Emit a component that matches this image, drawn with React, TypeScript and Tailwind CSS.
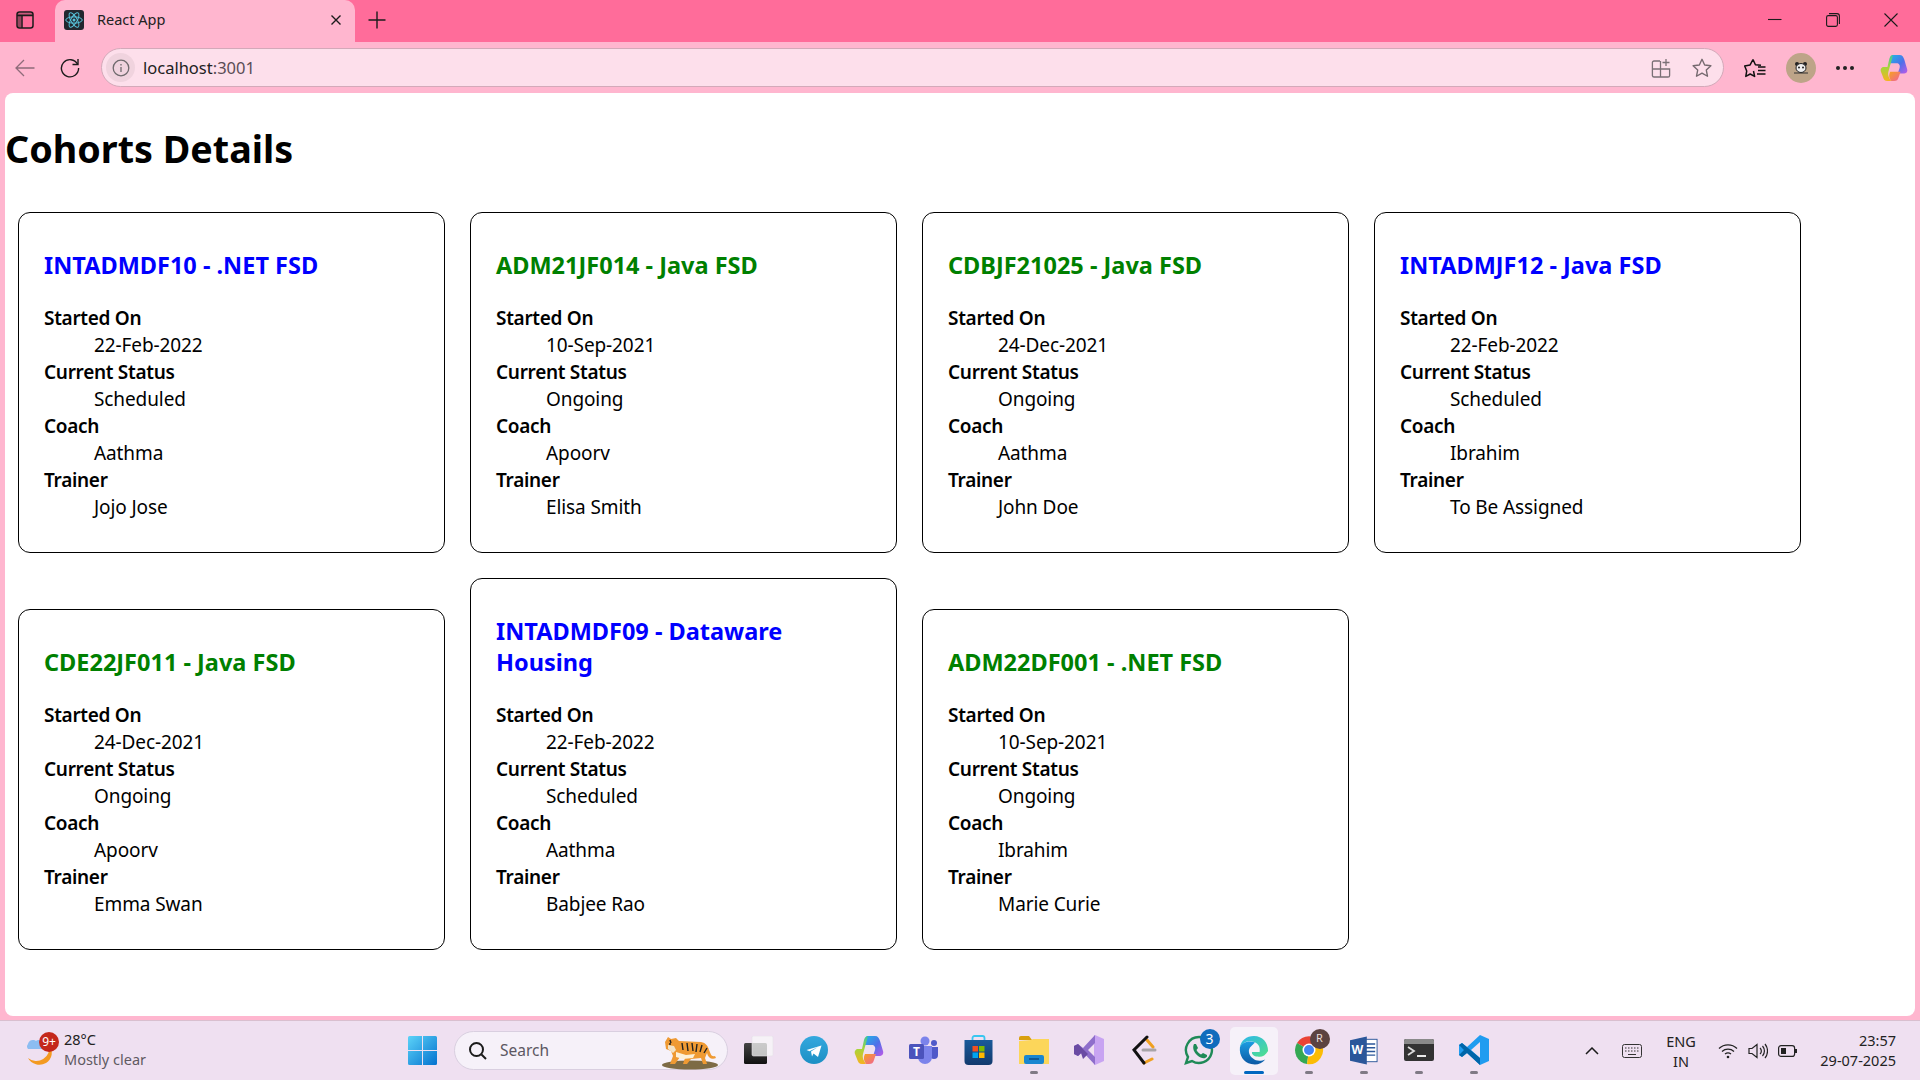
import React from "react";

const cards = [
  { t: "INTADMDF10 - .NET FSD", c: "text-[#0000ff]", d: "22-Feb-2022", s: "Scheduled", co: "Aathma", tr: "Jojo Jose" },
  { t: "ADM21JF014 - Java FSD", c: "text-[#008000]", d: "10-Sep-2021", s: "Ongoing", co: "Apoorv", tr: "Elisa Smith" },
  { t: "CDBJF21025 - Java FSD", c: "text-[#008000]", d: "24-Dec-2021", s: "Ongoing", co: "Aathma", tr: "John Doe" },
  { t: "INTADMJF12 - Java FSD", c: "text-[#0000ff]", d: "22-Feb-2022", s: "Scheduled", co: "Ibrahim", tr: "To Be Assigned" },
  { t: "CDE22JF011 - Java FSD", c: "text-[#008000]", d: "24-Dec-2021", s: "Ongoing", co: "Apoorv", tr: "Emma Swan" },
  { t: "INTADMDF09 - Dataware Housing", c: "text-[#0000ff]", d: "22-Feb-2022", s: "Scheduled", co: "Aathma", tr: "Babjee Rao" },
  { t: "ADM22DF001 - .NET FSD", c: "text-[#008000]", d: "10-Sep-2021", s: "Ongoing", co: "Ibrahim", tr: "Marie Curie" },
];

function Card({ t, c, d, s, co, tr }: (typeof cards)[number]) {
  const rows: [string, string][] = [["Started On", d], ["Current Status", s], ["Coach", co], ["Trainer", tr]];
  return (
    <div className="w-[427px] rounded-[12px] border border-black px-[25px] pt-[37px] pb-[31px]">
      <h3 className={`mb-[24px] text-[23.5px] leading-[31px] font-bold ${c}`}>{t}</h3>
      <dl className="text-[19px] leading-[27px]">
        {rows.map(([a, b]) => (
          <React.Fragment key={a}>
            <dt className="font-semibold tracking-[-0.3px]">{a}</dt>
            <dd className="pl-[50px] tracking-[-0.1px]">{b}</dd>
          </React.Fragment>
        ))}
      </dl>
    </div>
  );
}

function Task({ children, dot, active, badge }: { children: React.ReactNode; dot?: boolean; active?: boolean; badge?: React.ReactNode }) {
  return (
    <div className={`relative mx-[3.5px] flex h-[48px] w-[48px] items-center justify-center rounded-[5px] pb-[1px] ${active ? "bg-[#f6f1f9]" : ""}`}>
      {children}
      {badge}
      {dot && <span className="absolute bottom-[1px] h-[3px] w-[8px] rounded-full bg-[#7f7a85]" />}
      {active && <span className="absolute bottom-[1px] h-[3px] w-[20px] rounded-full bg-[#0067c0]" />}
    </div>
  );
}

export default function App() {
  return (
    <div className="flex h-[1080px] w-[1920px] flex-col overflow-hidden bg-[#ffb6cf] text-black" style={{ fontFamily: '"Noto Sans", sans-serif' }}>
      {/* title bar */}
      <div className="flex h-[42px] items-center bg-[#ff6c9a]">
        <div className="flex w-[55px] pb-[2px] pl-[16px]">
          <svg width="18" height="18" viewBox="0 0 18 18" fill="none" stroke="#1b1b1b" strokeWidth="1.5">
            <path d="M1.500 2.500h15v2h-15zM1.500 4.500h4v12h-4z" fill="#1b1b1b" stroke="none" opacity=".45" />
            <rect x="1" y="1" width="16" height="16" rx="2.500" />
            <path d="M1 4.500h16M6 4.500V17" />
          </svg>
        </div>
        <div className="flex h-[42px] w-[300px] items-center rounded-t-[10px] bg-[#ffb6cf] pb-[2px] pl-[9px] pr-[13px]">
          <div className="flex h-[20px] w-[20px] items-center justify-center rounded-[3px] bg-[#23272f]">
            <svg width="18" height="18" viewBox="-12 -11 24 22" fill="none" stroke="#58c4dc" strokeWidth="1.300">
              <circle r="2" fill="#58c4dc" stroke="none" />
              <ellipse rx="11" ry="4.200" />
              <ellipse rx="11" ry="4.200" transform="rotate(60)" />
              <ellipse rx="11" ry="4.200" transform="rotate(120)" />
            </svg>
          </div>
          <span className="ml-[13px] flex-1 text-[14.5px] text-[#222]">React App</span>
          <svg width="12" height="12" viewBox="0 0 12 12" stroke="#1b1b1b" strokeWidth="1.400"><path d="M1.500 1.500l9 9M10.500 1.500l-9 9" /></svg>
        </div>
        <div className="ml-[13px] flex pb-[2px]">
          <svg width="18" height="18" viewBox="0 0 18 18" stroke="#1b1b1b" strokeWidth="1.400"><path d="M9 .5v17M.5 9h17" /></svg>
        </div>
        <div className="ml-auto flex items-center pb-[2px]">
          <div className="flex w-[58px] justify-center"><svg width="14" height="14" viewBox="0 0 14 14" stroke="#1b1b1b" strokeWidth="1.100"><path d="M0 6.500h13.500" /></svg></div>
          <div className="flex w-[58px] justify-center">
            <svg width="14" height="14" viewBox="0 0 14 14" fill="none" stroke="#1b1b1b" strokeWidth="1.100"><rect x=".6" y="2.600" width="10.800" height="10.800" rx="1.600" /><path d="M3 .6h8a2.400 2.400 0 0 1 2.400 2.400v8" /></svg>
          </div>
          <div className="flex w-[58px] justify-center"><svg width="14" height="14" viewBox="0 0 14 14" stroke="#1b1b1b" strokeWidth="1.100"><path d="M.5.5l13 13M13.500.5l-13 13" /></svg></div>
        </div>
      </div>
      {/* toolbar */}
      <div className="flex h-[51px] items-center">
        <div className="flex w-[47px] justify-center pl-[3px]">
          <svg width="20" height="18" viewBox="0 0 20 18" fill="none" stroke="#8f6b7a" strokeWidth="1.300"><path d="M19.500 9H1M9 1L1 9l8 8" /></svg>
        </div>
        <div className="flex w-[46px] justify-center">
          <svg width="20" height="20" viewBox="0 0 20 20" fill="none" stroke="#1b1b1b" strokeWidth="1.400"><path d="M17.600 6.200A8.600 8.600 0 1 0 18.600 10" /><path d="M18 1v5.500h-5.500" /></svg>
        </div>
        <div className="ml-[8px] flex h-[39px] w-[1623px] items-center rounded-full border border-[#d3a9b9] bg-[#fddfeb] pl-[4px]">
          <div className="flex h-[29px] w-[29px] items-center justify-center rounded-full bg-[#f0d3de]">
            <svg width="18" height="18" viewBox="0 0 18 18" fill="none" stroke="#6f6a6d" strokeWidth="1.300"><circle cx="9" cy="9" r="7.800" /><path d="M9 8v5M9 5v1.400" /></svg>
          </div>
          <span className="ml-[8px] flex-1 pt-[1px] text-[16.5px] text-[#222]">localhost<span className="text-[#5b4d55]">:3001</span></span>
          <svg className="mr-[20px]" width="20" height="20" viewBox="0 0 20 20" fill="none" stroke="#7a7076" strokeWidth="1.300">
            <path d="M9 3H3a1.600 1.600 0 0 0-1.600 1.600v13A1.600 1.600 0 0 0 3 19h14a1.600 1.600 0 0 0 1.600-1.600V11H1.400M9.500 3v16M15 1v7M11.500 4.500h7" />
          </svg>
          <svg className="mr-[10px]" width="22" height="22" viewBox="0 0 24 24" fill="none" stroke="#75696f" strokeWidth="1.500" strokeLinejoin="round"><path d="M12 2.500l2.900 6.200 6.800.8-5 4.700 1.300 6.800-6-3.400-6 3.400 1.300-6.800-5-4.700 6.800-.8z" /></svg>
        </div>
        <div className="ml-[20px] flex w-[22px] justify-center">
          <svg width="22" height="20" viewBox="0 0 22 20" fill="none" stroke="#111" strokeWidth="1.500" strokeLinejoin="round"><path d="M9 1.500l2.400 5.200 5.600.6M9.500 13l1.100 5.400L6.200 16l-4.400 2.400.9-5.300L.7 8l5.400-1.100L9 1.500" /><path d="M14 9h7.500M14 12.500h7.500M13 16h8.500" /></svg>
        </div>
        <div className="ml-[20px] flex h-[30px] w-[30px] items-center justify-center rounded-full bg-[#bda488]">
          <svg width="14" height="12" viewBox="0 0 14 12"><circle cx="3" cy="2" r="2" fill="#222" /><circle cx="11" cy="2" r="2" fill="#222" /><ellipse cx="7" cy="6" rx="5" ry="4.500" fill="#eee" stroke="#222" /><circle cx="5" cy="5.500" r="1" fill="#222" /><circle cx="9" cy="5.500" r="1" fill="#222" /><path d="M0 11h14" stroke="#333" /></svg>
        </div>
        <div className="ml-[20px] flex w-[18px] justify-between">
          <span className="h-[4px] w-[4px] rounded-full bg-[#222]" /><span className="h-[4px] w-[4px] rounded-full bg-[#222]" /><span className="h-[4px] w-[4px] rounded-full bg-[#222]" />
        </div>
        <div className="ml-[26px]">
          <CopilotIcon size={28} id="t" />
        </div>
      </div>
      {/* page */}
      <div className="mx-[5px] h-[923px] flex-none rounded-[8px] bg-white">
        <h1 className="pt-[29px] text-[37.7px] leading-[53px] font-bold">Cohorts Details</h1>
        <div className="mt-[37px] flex flex-wrap items-end gap-x-[25px] gap-y-[25px] pl-[13px]">
          {cards.map((c) => <Card key={c.t} {...c} />)}
        </div>
      </div>
      <div className="h-[4px] flex-none bg-[#ffb6cf]" />
      {/* taskbar */}
      <div className="relative flex h-[60px] flex-none items-center border-t border-[#d9bfcf] bg-[#efe0f1]">
        <div className="relative ml-[24px] h-[40px] w-[40px] flex-none">
          <svg width="40" height="40" viewBox="0 0 40 40">
            <path d="M4 13a5 5 0 0 1 8-3 5 5 0 0 1 8 3 4 4 0 0 1 2 5H4a4 4 0 0 1 0-5z" fill="#8cbdf2" />
            <path d="M25 14a13 13 0 0 1-21 13 13 13 0 0 0 18 5 12 12 0 0 0 3-18z" fill="#f39a21" />
          </svg>
          <span className="absolute left-[15px] top-[1px] flex h-[20px] w-[20px] items-center justify-center rounded-full bg-[#c4281b] text-[12px] text-white">9+</span>
        </div>
        <div className="mb-[4px] w-[344px] flex-none text-[14.5px] leading-[20px] text-[#222]">
          <div>28°C</div>
          <div className="text-[#5f5a62]">Mostly clear</div>
        </div>
        <svg className="flex-none" width="29" height="29" viewBox="0 0 29 29"><defs><linearGradient id="w" x1="0" y1="0" x2="1" y2="1"><stop offset="0" stopColor="#5cd3f8" /><stop offset="1" stopColor="#0472cf" /></linearGradient></defs><path d="M0 1.500A1.500 1.500 0 0 1 1.500 0H14v14H0zM15 0h12.500A1.500 1.500 0 0 1 29 1.500V14H15zM0 15h14v14H1.500A1.500 1.500 0 0 1 0 27.500zM15 15h14v12.500a1.500 1.500 0 0 1-1.500 1.500H15z" fill="url(#w)" /></svg>
        <div className="relative ml-[17px] flex h-[39px] w-[274px] flex-none items-center rounded-full border border-[#d9cfe0] bg-[#f6f1f9]">
          <svg className="ml-[13px]" width="20" height="20" viewBox="0 0 20 20" fill="none" stroke="#1b1b1b" strokeWidth="2"><circle cx="8.500" cy="8.500" r="6.500" /><path d="M13.500 13.500L18 18" /></svg>
          <span className="ml-[12px] text-[15.5px] text-[#5c5762]">Search</span>
          <svg className="absolute right-[5px] top-[3px]" width="60" height="36" viewBox="0 0 60 36">
            <ellipse cx="28" cy="30" rx="28" ry="4.500" fill="#7d6b45" />
            <path d="M3 7l3-5 3 2 5-1 3 3 22 1c5 1 7 4 8 8 2 4 2 7 6 6l1 2c-4 2-8 0-9-5l-2 5 2 6h-4l-2-6-10 1-4 5h-4l2-6-5-1-5 7H8l3-8-2-5-5-2z" fill="#ef9a33" />
            <path d="M6 10l6 1 2 4-3 3-5-4z" fill="#f4e3c6" />
            <path d="M14 17l10 3 9-1-2 4-10 1-7-2z" fill="#fdf0d8" />
            <path d="M20 8l1 7M25 8l1 8M30 8l1 8M35 9l-1 8M40 10l-2 7M45 13l-3 5M8 5l1 3" stroke="#222" strokeWidth="1.400" fill="none" />
            <circle cx="8" cy="9" r="1" fill="#222" />
          </svg>
        </div>
        <div className="ml-[3px] flex flex-none items-center">
          <Task>
            <svg width="30" height="28" viewBox="0 0 30 28">
              <defs><linearGradient id="tv" x1="0" y1="0" x2="0" y2="1"><stop offset="0" stopColor="#444" /><stop offset="1" stopColor="#111" /></linearGradient></defs>
              <rect x="0" y="7" width="23" height="21" rx="1.500" fill="url(#tv)" />
              <rect x="8" y="0" width="21" height="20" rx="1.500" fill="#f8f8f8" fillOpacity=".75" stroke="#e6e0e8" strokeWidth=".6" />
            </svg>
          </Task>
          <Task>
            <svg width="28" height="28" viewBox="0 0 28 28">
              <defs><linearGradient id="tg" x1="0" y1="0" x2="0" y2="1"><stop offset="0" stopColor="#34a8de" /><stop offset="1" stopColor="#1c8fc4" /></linearGradient></defs>
              <circle cx="14" cy="14" r="14" fill="url(#tg)" />
              <path d="M6.500 14L21.500 9.500 18 21l-4.500-3.500L12 20.500l-1-5 7-4.500-8.500 4.200z" fill="#fff" />
            </svg>
          </Task>
          <Task><CopilotIcon size={30} id="b" /></Task>
          <Task>
            <svg width="30" height="28" viewBox="0 0 30 28"><circle cx="16" cy="5" r="4.500" fill="#7b83eb" /><circle cx="25" cy="7" r="3" fill="#5059c9" /><path d="M21 11h8v8a4 4 0 0 1-8 0z" fill="#5059c9" /><path d="M9 10h14v11a6.500 6.500 0 0 1-14 0z" fill="#7b83eb" /><rect y="8" width="15" height="15" rx="1.500" fill="#4b53bc" /><text x="7.500" y="20" fontSize="12" fontWeight="700" textAnchor="middle" fill="#fff">T</text></svg>
          </Task>
          <Task>
            <svg width="29" height="30" viewBox="0 0 28 30"><path d="M8 6V3a2 2 0 0 1 2-2h8a2 2 0 0 1 2 2v3" fill="none" stroke="#39c6f0" strokeWidth="1.800" /><defs><linearGradient id="st" x1="0" y1="0" x2="0" y2="1"><stop offset="0" stopColor="#1a5a9a" /><stop offset="1" stopColor="#123a6e" /></linearGradient></defs><path d="M0 5h28v21a4 4 0 0 1-4 4H4a4 4 0 0 1-4-4z" fill="url(#st)" /><rect x="8" y="11" width="5.500" height="5.500" fill="#f25022" /><rect x="14.500" y="11" width="5.500" height="5.500" fill="#7fba00" /><rect x="8" y="17.500" width="5.500" height="5.500" fill="#00a4ef" /><rect x="14.500" y="17.500" width="5.500" height="5.500" fill="#ffb900" /></svg>
          </Task>
          <Task dot>
            <svg width="30" height="28" viewBox="0 0 30 28"><path d="M0 2a2 2 0 0 1 2-2h8l3 4H0z" fill="#d9a00f" /><path d="M0 5l12-1 2-1h16v25H0z" fill="#fcd65a" /><rect x="5" y="19" width="20" height="9" rx="2" fill="#1a86d0" /><path d="M10 23h10" stroke="#0b4f8a" strokeWidth="1.600" /></svg>
          </Task>
          <Task>
            <svg width="30" height="30" viewBox="0 0 30 30"><path d="M21 0l9 4v22l-9 4-1-1V1z" fill="#c8a4f2" /><path d="M21 0L9 13 4 9l-4 2v8l4 2 5-4 12 13v-8l-7-7 7-7z" fill="#8e6ecb" /><path d="M0 11l4-2 10 10-5 5-2-6-3 3-4-2z" fill="#6a4ba3" /></svg>
          </Task>
          <Task>
            <svg width="26" height="30" viewBox="0 0 26 30" fill="none" strokeLinecap="round" strokeWidth="3"><path d="M16 5l6 7M13 28l8-4" stroke="#f0a020" /><path d="M16 2L3 15l10 13" stroke="#111" /><path d="M12 15h12" stroke="#a8a4a8" /></svg>
          </Task>
          <Task badge={<span className="absolute right-[3px] top-[2px] flex h-[20px] w-[20px] items-center justify-center rounded-full bg-[#0f6cbd] text-[14px] text-white">3</span>}>
            <svg width="30" height="30" viewBox="0 0 30 30" fill="none"><path d="M15 2a13 13 0 0 0-11 20l-2 6 6-2A13 13 0 1 0 15 2z" stroke="#1f8a57" strokeWidth="2.400" /><path d="M10 9l2 0 2 4-1.500 2c1 2 3 3.500 4.500 4.500l2-1.500 4 2 0 1.500c-2 3-6 2-9.500-1S8 13 10 9z" fill="#1f8a57" /></svg>
          </Task>
          <Task active>
            <svg width="30" height="30" viewBox="0 0 32 32"><defs><linearGradient id="e1" x1="0" y1="0" x2="1" y2="1"><stop offset="0" stopColor="#2bb5ee" /><stop offset="1" stopColor="#50e08a" /></linearGradient><linearGradient id="e2" x1="0" y1="0" x2="0" y2="1"><stop offset="0" stopColor="#1b9de2" /><stop offset="1" stopColor="#0c59a4" /></linearGradient></defs><path d="M31 17C31 8 25 1 16 1 8 1 2 6 1 13c3-5 8-7 13-6 6 1 9 5 8 11h-8c-1 2 2 5 6 5 4 1 8-1 11-6z" fill="url(#e1)" /><path d="M1 13c-1 9 4 16 12 18 6 1 11 0 15-5-4 2-10 2-13-1-5-3-6-10-2-13 1-1 2-2 4-4C12 6 4 7 1 13z" fill="url(#e2)" /></svg>
          </Task>
          <Task dot badge={<span className="absolute right-[3px] top-[2px] flex h-[20px] w-[20px] items-center justify-center rounded-full bg-[#5c4340] text-[11px] text-[#e8ddd8]">R</span>}>
            <svg width="30" height="30" viewBox="0 0 30 30"><path d="M15 15L3 8a14 14 0 0 1 24 0z" fill="#ea4335" /><path d="M15 15l-12-7a14 14 0 0 0 10 21z" fill="#34a853" /><path d="M15 15l-2 14a14 14 0 0 0 14-21z" fill="#fbbc05" /><circle cx="15" cy="15" r="6.500" fill="#fff" /><circle cx="15" cy="15" r="5" fill="#4285f4" /></svg>
          </Task>
          <Task dot>
            <svg width="28" height="29" viewBox="0 0 30 30"><rect x="10" y="3" width="19" height="24" fill="#fff" stroke="#2b579a" /><path d="M17 8h10M17 12h10M17 16h10M17 20h10" stroke="#2b579a" strokeWidth="1.500" /><path d="M0 4l18-4v30L0 26z" fill="#2b579a" /><text x="8" y="19" fontSize="13" fontWeight="700" textAnchor="middle" fill="#fff">W</text></svg>
          </Task>
          <Task dot>
            <svg width="30" height="22" viewBox="0 0 30 22"><rect width="30" height="22" rx="2" fill="#333" /><path d="M0 2a2 2 0 0 1 2-2h26a2 2 0 0 1 2 2v3H0z" fill="#8a8a8a" /><path d="M4 8l6 4-6 4" fill="none" stroke="#ddd" strokeWidth="1.800" /><path d="M13 17h9" stroke="#fff" strokeWidth="1.800" /></svg>
          </Task>
          <Task dot>
            <svg width="30" height="30" viewBox="0 0 30 30"><path d="M21 0l9 4v22l-9 4L8 18l-5 4-3-2v-10l3-2 5 4z" fill="#1f9cf0" /><path d="M21 7v16l-9-8z" fill="#efe0f1" /><path d="M0 10l3-2 18 15v7L8 18l-5 4-3-2 5-5z" fill="#0065a9" /></svg>
          </Task>
        </div>
        <div className="ml-auto flex flex-none items-center pr-[24px] text-[#222]">
          <svg width="14" height="8" viewBox="0 0 14 8" fill="none" stroke="#1b1b1b" strokeWidth="1.500"><path d="M1 7l6-6 6 6" /></svg>
          <svg className="ml-[23px]" width="20" height="14" viewBox="0 0 20 14" fill="none" stroke="#333"><rect x=".5" y=".5" width="19" height="13" rx="2" /><path d="M3 4h14M3 7h14" strokeDasharray="1.500 1.500" /><path d="M6 10.500h8" /></svg>
          <div className="ml-[21px] w-[36px] text-center text-[14.5px] leading-[20px]">ENG<br />IN</div>
          <svg className="ml-[19px]" width="20" height="16" viewBox="0 0 20 16" fill="none" stroke="#222" strokeWidth="1.300"><path d="M1 5.500a13 13 0 0 1 18 0M4 8.500a9 9 0 0 1 12 0M7 11a5 5 0 0 1 6 0" /><circle cx="10" cy="14" r="1.300" fill="#222" stroke="none" /></svg>
          <svg className="ml-[10px]" width="20" height="18" viewBox="0 0 20 18" fill="none" stroke="#222" strokeWidth="1.200"><path d="M1 6.500h3L9 2.500v13l-5-4H1zM12 6a4 4 0 0 1 0 6M14.500 4a7.500 7.500 0 0 1 0 10M17 2a11 11 0 0 1 0 14" /></svg>
          <svg className="ml-[10px]" width="20" height="12" viewBox="0 0 20 12" fill="none" stroke="#222" strokeWidth="1.200"><rect x=".6" y=".6" width="16" height="10.800" rx="2.500" /><rect x="3" y="3" width="5" height="6" fill="#222" stroke="none" /><path d="M18 4v4" strokeWidth="2" /></svg>
          <div className="mb-[1px] ml-[14px] w-[84px] text-right text-[14.5px] leading-[20px]">
            <div>23:57</div>
            <div>29-07-2025</div>
          </div>
        </div>
      </div>
    </div>
  );
}

function CopilotIcon({ size, id }: { size: number; id: string }) {
  return (
    <svg width={size} height={size} viewBox="0 0 30 30">
      <defs>
        <linearGradient id={`${id}1`} x1="0" y1="0" x2="1" y2="1"><stop offset="0" stopColor="#1fb8e8" /><stop offset=".55" stopColor="#4f6fe8" /><stop offset="1" stopColor="#c05ae8" /></linearGradient>
        <linearGradient id={`${id}2`} x1="0" y1="0" x2="0" y2="1"><stop offset="0" stopColor="#3fc4a0" /><stop offset=".45" stopColor="#a4d63a" /><stop offset="1" stopColor="#f7b21f" /></linearGradient>
        <linearGradient id={`${id}3`} x1="0" y1="0" x2="1" y2="1"><stop offset="0" stopColor="#f7a21f" /><stop offset="1" stopColor="#f0609a" /></linearGradient>
      </defs>
      <path d="M13 1h8c3 0 4 2 5 5l3 10c1 3-1 5-4 5h-6l2-6c1-3-1-5-3-5h-8l2-6c0-2 1-3 1-3z" fill={`url(#${id}1)`} />
      <path d="M10 5c1-3 2-4 4-4l-5 18c-1 4 1 7 3 10H8c-3 0-4-2-5-5L1 19c-1-3 1-5 3-5h4z" fill={`url(#${id}2)`} />
      <path d="M11 19h11l-2 6c-1 3-2 4-5 4h-3c-2-3-3-6-1-10z" fill={`url(#${id}3)`} />
    </svg>
  );
}
